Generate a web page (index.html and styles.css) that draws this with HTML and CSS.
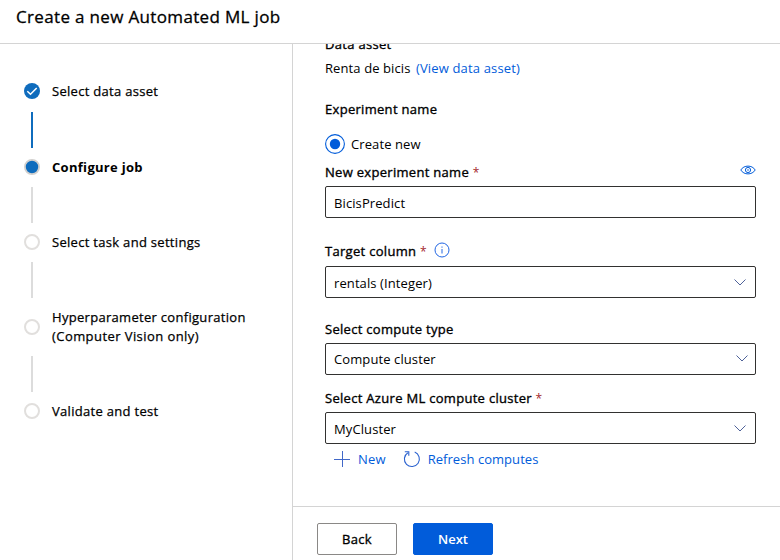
FILE: index.html
```
<!DOCTYPE html>
<html lang="en">
<head>
<meta charset="utf-8">
<title>Create a new Automated ML job</title>
<link rel="stylesheet" href="styles.css">
</head>
<body>
<header class="header"><h1 class="title">Create a new Automated ML job</h1></header>
<div class="layout">
  <nav class="steps">
    <div class="step">
      <svg class="dot" viewBox="0 0 16 16"><circle cx="8" cy="8" r="8" fill="#0f6cbd"/><path d="M3.300 8.200l3.200 3.100 6.200-6.300" fill="none" stroke="#fff" stroke-width="1.500"/></svg>
      <span>Select data asset</span>
    </div>
    <div class="line line-done"></div>
    <div class="step">
      <svg class="dot" viewBox="0 0 16 16"><circle cx="8" cy="8" r="7.100" fill="#0f6cbd" stroke="#d2d0ce" stroke-width="1.800"/></svg>
      <span class="current">Configure job</span>
    </div>
    <div class="line"></div>
    <div class="step"><i class="dot ring"></i><span>Select task and settings</span></div>
    <div class="line"></div>
    <div class="step step-tall"><i class="dot ring"></i><span>Hyperparameter configuration<br><span class="wide">(Computer Vision only)</span></span></div>
    <div class="line line-last"></div>
    <div class="step"><i class="dot ring"></i><span>Validate and test</span></div>
  </nav>
  <main class="main">
    <div class="form">
      <div class="label first">Data asset</div>
      <div class="asset">Renta de bicis <a class="link view">(View data asset)</a></div>
      <div class="label experiment">Experiment name</div>
      <div class="radio">
        <svg width="20" height="20" viewBox="0 0 20 20"><circle cx="10" cy="10" r="9.400" fill="#fff" stroke="#015cda" stroke-width="1.100"/><circle cx="10" cy="10" r="5.200" fill="#015cda"/></svg>
        <span>Create new</span>
      </div>
      <div class="label name-label"><span>New experiment name <b class="req">*</b></span>
        <svg class="eye" width="16" height="10" viewBox="0 0 16 10"><path d="M.8 5C3.800-.2 12.200-.2 15.200 5 12.200 10.200 3.800 10.200.8 5z" fill="none" stroke="#015cda"/><circle cx="8" cy="5" r="2.600" fill="none" stroke="#015cda"/><circle cx="8" cy="5" r=".8" fill="#015cda"/></svg>
      </div>
      <div class="box name-box">BicisPredict</div>
      <div class="label target-label"><span>Target column <b class="req">*</b></span>
        <svg class="info" width="16" height="16" viewBox="0 0 16 16" fill="none" stroke="#2266e3"><circle cx="8" cy="8" r="7"/><path d="M8 7v4.500M8 4.500v1.200"/></svg>
      </div>
      <div class="box target-box">rentals (Integer)<svg class="chev" viewBox="0 0 12 7"><path d="M.5.5L6 6 11.500.5"/></svg></div>
      <div class="label type-label">Select compute type</div>
      <div class="box type-box">Compute cluster<svg class="chev" viewBox="0 0 12 7"><path d="M.5.5L6 6 11.500.5"/></svg></div>
      <div class="label cluster-label"><span>Select Azure ML compute cluster <b class="req">*</b></span></div>
      <div class="box">MyCluster<svg class="chev" viewBox="0 0 12 7"><path d="M.5.5L6 6 11.500.5"/></svg></div>
      <div class="actions">
        <svg width="16" height="16" viewBox="0 0 16 16"><path d="M0 8.500h16M8.500 0v16" stroke="#4168c8"/></svg>
        <a class="link new">New</a>
        <svg width="18" height="18" viewBox="0 0 18 18" fill="none" stroke="#2b62cf" stroke-width="1.100"><path d="M11.700 2.100A7.500 7.500 0 1 1 4.900 2.700"/><path d="M1.800 1.800h4v4"/></svg>
        <a class="link refresh">Refresh computes</a>
      </div>
    </div>
    <footer class="footer"><button class="btn">Back</button><button class="btn primary">Next</button></footer>
  </main>
</div>
</body>
</html>
```
FILE: styles.css
```
* { box-sizing: border-box; }
body {
  margin: 0;
  height: 560px;
  display: flex;
  flex-direction: column;
  overflow: hidden;
  background: #fff;
  color: #000;
  font: 13px/18px "Open Sans", "Noto Sans", sans-serif;
  letter-spacing: .1px;
}
.header { height: 44px; flex: none; padding: 5px 16px; border-bottom: 1px solid #d4d4d4; }
.title { margin: 0; font-size: 17px; line-height: 24px; font-weight: 400; letter-spacing: .34px; -webkit-text-stroke: .3px #000; }
.layout { flex: 1; min-height: 0; display: flex; }
.steps { width: 293px; flex: none; padding: 38px 24px 0; border-right: 1px solid #d4d4d4; letter-spacing: .3px; -webkit-text-stroke: .25px #000; }
.step { display: flex; align-items: center; gap: 12px; height: 18px; white-space: nowrap; }
.step-tall { height: 38px; line-height: 19px; }
.dot { width: 16px; height: 16px; flex: none; }
.ring { border: 2px solid #e1dfdd; border-radius: 50%; }
.current { font-weight: 700; -webkit-text-stroke: 0; }
.wide { letter-spacing: .43px; }
.line { width: 2px; height: 36px; margin: 11px 0 10px 7px; background: #dcdcdc; }
.line-done { margin-top: 12px; background: #0f6cbd; }
.line-last { margin-top: 10px; }
.main { flex: 1; min-width: 0; display: flex; flex-direction: column; }
.form { flex: 1; min-height: 0; overflow: hidden; padding: 0 24px 0 32px; }
.label { display: flex; align-items: center; height: 18px; letter-spacing: .3px; -webkit-text-stroke: .35px #000; }
.first { margin-top: -9px; }
.asset { margin-top: 6px; }
.link { color: #015cda; margin-left: 1px; letter-spacing: .15px; }
.view { margin-left: 2px; }
.experiment { margin-top: 23px; }
.radio { display: flex; align-items: center; gap: 6px; height: 20px; margin-top: 16px; }
.name-label { justify-content: space-between; margin-top: 9px; }
.eye { margin-top: -4px; }
.req { color: #a4262c; font-size: 12px; font-weight: 400; letter-spacing: 0; -webkit-text-stroke: 0; }
.box { display: flex; align-items: center; justify-content: space-between; height: 32px; margin-top: 5px; padding: 2px 9px 0 8px; border: 1px solid #323130; border-radius: 2px; }
.target-label { margin-top: 24px; gap: 7px; }
.info { margin-top: -2px; }
.target-box { margin-top: 6px; }
.chev { width: 12px; height: 7px; margin-top: -2px; fill: none; stroke: #4f6299; }
.type-label { margin-top: 22px; }
.type-box { padding-right: 7px; padding-top: 0; }
.type-box .chev { margin-top: -1px; }
.cluster-label { margin-top: 14px; }
.actions { display: flex; align-items: center; height: 18px; margin: 6px 0 0 9px; }
.new { margin: 0 17px 0 8px; }
.refresh { margin-left: 7px; letter-spacing: .05px; }
.footer { height: 54px; flex: none; display: flex; gap: 16px; padding: 16px 24px 0; border-top: 1px solid #d4d4d4; }
.btn { width: 80px; height: 32px; padding: 0; border: 1px solid #8a8886; border-radius: 2px; background: #fff; color: #000; font: 400 13px/18px "Open Sans", sans-serif; letter-spacing: .3px; -webkit-text-stroke: .35px #000; }
.primary { background: #015cda; border-color: #015cda; color: #fff; font-weight: 600; letter-spacing: 0; -webkit-text-stroke: 0; }
```
